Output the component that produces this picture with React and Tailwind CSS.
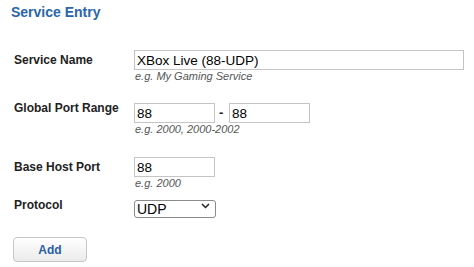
import { useState } from 'react';

export default function App() {
  const [name, setName] = useState('XBox Live (88-UDP)');
  const [portFrom, setPortFrom] = useState('88');
  const [portTo, setPortTo] = useState('88');
  const [hostPort, setHostPort] = useState('88');
  const [protocol, setProtocol] = useState('UDP');

  const inputCls =
    'h-[20px] border border-[#c4c4c4] bg-white px-[2px] text-[13.5px] leading-[18px] text-black outline-none';

  return (
    <div className="min-h-screen w-[474px] bg-white font-['Liberation_Sans',Arial,sans-serif] text-[#222]">
      {/* Header */}
      <div className="pl-[11px] pt-[4px] text-[14px] font-bold leading-[17px] text-[#2a66aa]">
        Service Entry
      </div>

      <div className="pl-[14px] pt-[29px]">
        {/* Service Name */}
        <div className="flex items-start">
          <label className="mt-[2px] w-[120px] text-[12px] font-bold leading-[16px]">Service Name</label>
          <div className="flex flex-col">
            <input value={name} onChange={(e) => setName(e.target.value)} className={`${inputCls} w-[330px]`} />
            <span className="pl-[1px] text-[11px] italic leading-[13px] text-[#555]">e.g. My Gaming Service</span>
          </div>
        </div>

        {/* Global Port Range */}
        <div className="mt-[20px] flex items-start">
          <label className="-mt-[3px] w-[120px] text-[12px] font-bold leading-[16px]">Global Port Range</label>
          <div className="flex flex-col">
            <div className="flex items-center">
              <input value={portFrom} onChange={(e) => setPortFrom(e.target.value)} className={`${inputCls} w-[81px]`} />
              <span className="mx-[4px] w-[6px] text-[13px] font-bold leading-[16px]">-</span>
              <input value={portTo} onChange={(e) => setPortTo(e.target.value)} className={`${inputCls} w-[81px]`} />
            </div>
            <span className="pl-[1px] text-[11px] italic leading-[13px] text-[#555]">e.g. 2000, 2000-2002</span>
          </div>
        </div>

        {/* Base Host Port */}
        <div className="mt-[21px] flex items-start">
          <label className="mt-[2px] w-[120px] text-[12px] font-bold leading-[16px]">Base Host Port</label>
          <div className="flex flex-col">
            <input value={hostPort} onChange={(e) => setHostPort(e.target.value)} className={`${inputCls} w-[81px]`} />
            <span className="pl-[1px] text-[11px] italic leading-[13px] text-[#555]">e.g. 2000</span>
          </div>
        </div>

        {/* Protocol */}
        <div className="mt-[7px] flex items-start">
          <label className="w-[120px] text-[12px] font-bold leading-[16px]">Protocol</label>
          <div className="relative h-[18px] w-[82px]">
            <select
              value={protocol}
              onChange={(e) => setProtocol(e.target.value)}
              className="h-[18px] w-[82px] appearance-none rounded-[3px] border border-[#8a8a8a] bg-white pl-[2px] text-[14px] leading-[16px] text-black outline-none"
            >
              <option>UDP</option>
              <option>TCP</option>
              <option>Both</option>
            </select>
            <svg className="pointer-events-none absolute right-[6px] top-[6px]" width="9" height="6" viewBox="0 0 9 6">
              <path d="M1 1 L4.5 4.5 L8 1" fill="none" stroke="#222" strokeWidth="1.5" />
            </svg>
          </div>
        </div>

        <button className="mt-[22px] -ml-[1px] h-[25px] w-[74px] rounded-[4px] border border-[#c6c6c6] bg-gradient-to-b from-white to-[#ebebeb] text-[12px] font-bold text-[#2a5fa3]">
          Add
        </button>
      </div>
    </div>
  );
}
